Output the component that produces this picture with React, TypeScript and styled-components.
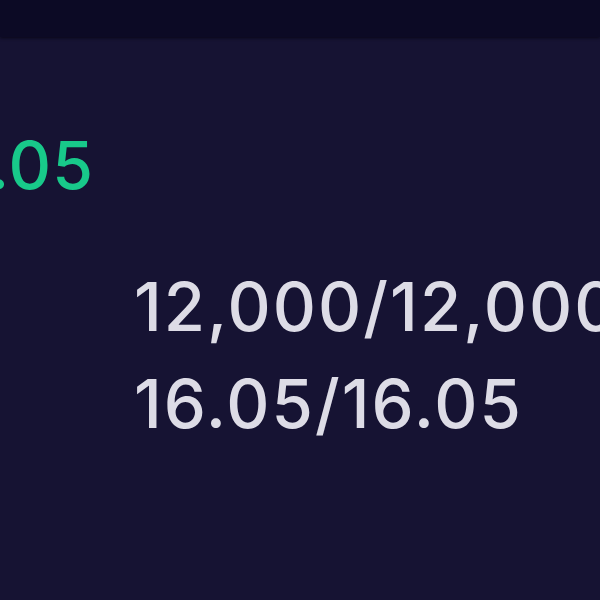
import React from "react";
import styled, { createGlobalStyle } from "styled-components";

const Global = createGlobalStyle`
  html, body { margin: 0; padding: 0; background: #161333; }
  body { font-family: Inter, "Noto Sans", sans-serif; }
`;

const Page = styled.div`
  width: 600px;
  height: 600px;
  overflow: hidden;
  background: #161333;
  display: flex;
  flex-direction: column;
`;

const TopBar = styled.div`
  height: 37px;
  flex: none;
  background: #0c0a25;
  box-shadow: 0 1px 3px rgba(5, 4, 18, 0.8);
`;

const PriceRow = styled.div`
  width: 94px;
  margin-top: 88px;
  display: flex;
  justify-content: flex-end;
  overflow: visible;
  white-space: nowrap;
`;

const Price = styled.div`
  font-size: 66px;
  line-height: 80px;
  color: #18c98a;
  font-weight: 500;
  letter-spacing: 1px;
`;

const Stats = styled.div`
  margin-top: 53px;
  padding-left: 134px;
  display: flex;
  flex-direction: column;
  white-space: nowrap;
`;

const StatLine = styled.div`
  font-size: 67px;
  line-height: 97px;
  color: #dddce6;
  font-weight: 500;
  letter-spacing: 2px;
`;

export default function App() {
  return (
    <Page>
      <Global />
      <TopBar />
      <PriceRow>
        <Price>16.05</Price>
      </PriceRow>
      <Stats>
        <StatLine>12,000/12,000</StatLine>
        <StatLine>16.05/16.05</StatLine>
      </Stats>
    </Page>
  );
}
